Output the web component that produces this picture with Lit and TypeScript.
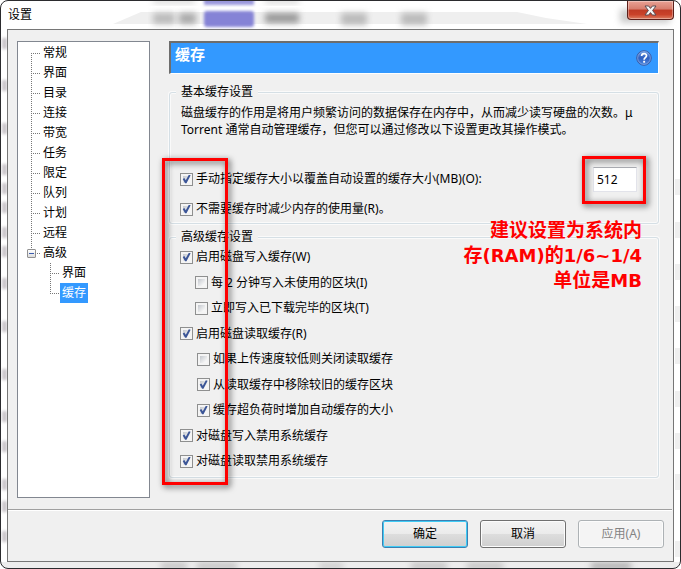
import { LitElement, html, css, svg } from "lit";
import { customElement, property, state } from "lit/decorators.js";
import { classMap } from "lit/directives/class-map.js";

interface Option {
  id: string;
  text: string;
  on: boolean;
  level?: "write" | "read";
}

const UI_FONT = css`"Noto Sans", "Noto Sans CJK SC", sans-serif`;

@customElement("check-option")
class CheckOption extends LitElement {
  @property() text = "";
  @property({ type: Boolean }) on = false;

  static styles = css`
    :host {
      display: block;
    }
    .option {
      display: flex;
      align-items: center;
      gap: 3px;
      height: 16px;
      line-height: 16px;
      white-space: nowrap;
    }
    .box {
      appearance: none;
      flex: none;
      box-sizing: border-box;
      width: 13px;
      height: 13px;
      margin: 0;
      border: 1px solid #8e8f8f;
      background: linear-gradient(135deg, #c3c7cd, #f6f6f6 80%) content-box, #f4f4f4;
      padding: 2px;
      position: relative;
    }
    .box:checked::before {
      content: "";
      position: absolute;
      inset: 1px;
      background: #3b5597;
      clip-path: polygon(8% 50%, 26% 40%, 42% 64%, 76% 2%, 96% 8%, 50% 98%, 34% 98%);
    }
  `;

  render() {
    return html`<label class="option">
      <input class="box" type="checkbox" .checked=${this.on} />
      <span>${this.text}</span>
    </label>`;
  }
}

@customElement("settings-tree")
class SettingsTree extends LitElement {
  @state() private selected = "cache";

  private items = ["常规", "界面", "目录", "连接", "带宽", "任务", "限定", "队列", "计划", "远程"];

  static styles = css`
    :host {
      display: block;
      box-sizing: border-box;
      border: 1px solid #828790;
      background: #fff;
      padding-top: 1px;
    }
    .list {
      list-style: none;
      margin: 0;
      padding: 0;
    }
    .row {
      display: flex;
      height: 20px;
    }
    .branch {
      flex: none;
      width: 23px;
      background:
        repeating-linear-gradient(to bottom, #777 0 1px, transparent 1px 2px) 13px 0 / 1px 100% no-repeat,
        repeating-linear-gradient(to right, #777 0 1px, transparent 1px 2px) 13px 10px / 9px 1px no-repeat;
    }
    .first {
      background-position: 13px 10px, 13px 10px;
    }
    .last {
      background-size: 1px 10px, 9px 1px;
    }
    .nested .branch {
      width: 42px;
      background-position: 32px 0, 32px 10px;
    }
    .item {
      font: inherit;
      color: #000;
      border: 0;
      background: none;
      margin: 0;
      padding: 0 2px;
      line-height: 20px;
    }
    .branch.parent {
      display: flex;
      align-items: center;
      padding-left: 9px;
      width: 14px;
    }
    .toggle {
      box-sizing: border-box;
      width: 9px;
      height: 9px;
      padding: 0;
      border: 1px solid #919191;
      border-radius: 1px;
      background:
        linear-gradient(#3b5cae, #3b5cae) center / 5px 1px no-repeat,
        linear-gradient(#fff, #dcdcdc);
    }
    .selected {
      background: #3399ff;
      color: #fff;
    }
  `;

  private item(id: string, text: string) {
    return html`<button
      class=${classMap({ item: true, selected: this.selected === id })}
      @click=${() => (this.selected = id)}
    >${text}</button>`;
  }

  render() {
    return html`<ul class="list">
      ${this.items.map(
        (t, i) => html`<li class="row">
          <span class=${classMap({ branch: true, first: i === 0 })}></span>${this.item(t, t)}
        </li>`,
      )}
      <li>
        <div class="row">
          <span class="branch last parent"><button class="toggle" aria-label="折叠"></button></span>
          ${this.item("advanced", "高级")}
        </div>
        <ul class="list nested">
          <li class="row"><span class="branch"></span>${this.item("advanced-ui", "界面")}</li>
          <li class="row"><span class="branch last"></span>${this.item("cache", "缓存")}</li>
        </ul>
      </li>
    </ul>`;
  }
}

@customElement("app-root")
class AppRoot extends LitElement {
  @state() private size = "512";

  private advanced: Option[] = [
    { id: "w", text: "启用磁盘写入缓存(W)", on: true },
    { id: "i", text: "每 2 分钟写入未使用的区块(I)", on: false, level: "write" },
    { id: "t", text: "立即写入已下载完毕的区块(T)", on: false, level: "write" },
    { id: "r", text: "启用磁盘读取缓存(R)", on: true },
    { id: "slow", text: "如果上传速度较低则关闭读取缓存", on: false, level: "read" },
    { id: "old", text: "从读取缓存中移除较旧的缓存区块", on: true, level: "read" },
    { id: "grow", text: "缓存超负荷时增加自动缓存的大小", on: true, level: "read" },
    { id: "dw", text: "对磁盘写入禁用系统缓存", on: true },
    { id: "dr", text: "对磁盘读取禁用系统缓存", on: true },
  ];

  static styles = css`
    :host {
      display: block;
      font: 12px/16px ${UI_FONT};
      color: #000;
    }
    .window {
      box-sizing: border-box;
      min-height: 100vh;
      display: flex;
      flex-direction: column;
      position: relative;
      overflow: hidden;
      border: 1px solid #2b2b2e;
      border-radius: 8px;
      padding: 0 6px 6px;
      background: linear-gradient(#fff, #fff) top / 100% calc(100% - 6px) no-repeat, #ededed;
    }
    .glass {
      position: absolute;
      inset: 0;
      width: 100%;
      height: 100%;
    }
    .title {
      position: relative;
      display: flex;
      justify-content: space-between;
      align-items: flex-start;
      height: 28px;
    }
    .caption {
      margin: 0;
      padding-left: 1px;
      font: inherit;
      line-height: 28px;
    }
    .close {
      width: 47px;
      height: 19px;
      padding: 0;
      display: grid;
      place-items: center;
      border: 1px solid #5b1f1a;
      border-top: 0;
      border-radius: 0 0 4px 4px;
      background: linear-gradient(#e9a295, #d67c6c 45%, #bf3a25 50%, #c9422a 75%, #dd7c60);
      box-shadow: inset 0 0 0 1px #ffffff55;
    }
    .client {
      position: relative;
      flex: 1;
      display: flex;
      flex-direction: column;
      border: 1px solid #767676;
      background: #f0f0f0;
    }
    .main {
      flex: 1;
      display: flex;
      gap: 19px;
      padding: 11px 14px 11px 9px;
    }
    .tree {
      flex: none;
      width: 133px;
    }
    .panel {
      flex: 1;
      min-width: 0;
      display: flex;
      flex-direction: column;
      position: relative;
      padding-bottom: 20px;
    }
    .banner {
      display: flex;
      justify-content: space-between;
      align-items: flex-start;
      box-sizing: border-box;
      height: 33px;
      margin-bottom: 10px;
      padding: 0 6px 0 4px;
      border: 2px solid #6d6d6d;
      border-right: 1px solid #fff;
      border-bottom: 1px solid #fff;
      background: #3399ff;
      color: #fff;
    }
    .heading {
      margin: 0;
      font: bold 15px/22px ${UI_FONT};
    }
    .help {
      width: 16px;
      height: 16px;
      margin-top: 7px;
      padding: 0;
      border: 0;
      background: none;
    }
    .group {
      min-width: 0;
      margin: 0 0 5px;
      padding: 4px 10px 6px;
      border: 1px solid #d5dfe5;
      border-radius: 3px;
      box-shadow: 0 0 0 1px #fafafa, inset 0 0 0 1px #fafafa;
    }
    .legend {
      margin-left: -4px;
      padding: 0 5px;
      height: 16px;
      background: #f0f0f0;
    }
    .note {
      margin: 0 8px 28px 1px;
      line-height: 17px;
    }
    .size-row {
      display: flex;
      justify-content: space-between;
      align-items: center;
      height: 26px;
      margin: 0 11px 9px 0;
    }
    .marked {
      position: relative;
      align-self: flex-end;
    }
    .size {
      display: block;
      box-sizing: border-box;
      width: 44px;
      height: 25px;
      padding: 0 3px;
      border: 1px solid #e2e3ea;
      border-top-color: #abadb3;
      background: #fff;
      font: inherit;
    }
    .advanced {
      flex: 1;
      display: flex;
      flex-direction: column;
      margin: 0;
      padding-bottom: 8px;
    }
    .options {
      height: 100%;
      display: flex;
      flex-direction: column;
      justify-content: space-between;
    }
    .write {
      margin-left: 15px;
    }
    .read {
      margin-left: 17px;
    }
    .frame {
      position: absolute;
      box-sizing: border-box;
      border: 3px solid #f00;
      filter: drop-shadow(2px 2px 3px #000000b0);
      pointer-events: none;
    }
    .frame-size {
      inset: -11px -9px -12px -11px;
    }
    .frame-checks {
      left: -7px;
      top: 117px;
      bottom: 13px;
      width: 66px;
    }
    .advice {
      position: absolute;
      right: 17px;
      top: 175px;
      margin: 0;
      text-align: right;
      color: #f00;
      font: bold 19px/25px "Noto Sans CJK SC", sans-serif;
    }
    .latin {
      font: bold 18px/18px "DejaVu Sans", sans-serif;
    }
    .footer {
      display: flex;
      justify-content: flex-end;
      gap: 12px;
      margin-right: 1px;
      padding: 10px 8px 13px;
      border-top: 1px solid #a0a0a0;
      box-shadow: inset 0 1px #fff;
    }
    .button {
      box-sizing: border-box;
      width: 86px;
      height: 28px;
      padding: 0;
      border: 1px solid #707070;
      border-radius: 3px;
      background: linear-gradient(#f3f3f3, #ebebeb 48%, #dddddd 50%, #cfcfcf);
      box-shadow: inset 0 0 0 1px #fcfcfc;
      color: #000;
      font: inherit;
    }
    .default {
      border-color: #3c7fb1;
      box-shadow: inset 0 0 0 1px #3fcbf5;
    }
    .button:disabled {
      border-color: #adb2b5;
      background: #f4f4f4;
      color: #838383;
    }
  `;

  private glass() {
    const smudges: [number, number, number, number, string][] = [
      [152, 12, 22, 11, "#bbb"],
      [178, 12, 17, 11, "#aaa"],
      [264, 12, 34, 10, "#999"],
      [340, 12, 26, 12, "#bbb"],
      [400, 12, 26, 12, "#bbb"],
      [619, 8, 50, 14, "#ccc"],
      [152, -2, 42, 4, "#ccc"],
      [264, -2, 34, 4, "#ccc"],
      [160, 563, 26, 4, "#aaa"],
      [196, 563, 40, 4, "#aaa"],
      [318, 563, 24, 4, "#bbb"],
      [410, 563, 36, 4, "#aaa"],
      [466, 563, 36, 4, "#aaa"],
      [590, 563, 40, 4, "#888"],
    ];
    const left = [37, 79, 122, 163, 182, 201, 226, 245, 277, 320, 368, 410, 440, 478, 500, 530];
    const right = [178, 221, 263, 305, 347, 390, 432, 473, 540];
    return html`<svg class="glass" aria-hidden="true">
      <defs>
        <filter id="soft" x="-20%" y="-60%" width="140%" height="220%">
          <feGaussianBlur stdDeviation="3" />
        </filter>
        <filter id="slight" x="-20%" y="-40%" width="140%" height="180%">
          <feGaussianBlur stdDeviation="1.5" />
        </filter>
      </defs>
      <path d="M112 23 L140 11 H516 L545 17 L586 23 Z" fill="#efefef" />
      ${smudges.map(
        ([x, y, w, h, c]) => svg`<rect x=${x} y=${y} width=${w} height=${h} fill=${c} filter="url(#soft)" />`,
      )}
      <rect x="203" y="-3" width="50" height="7" fill="#9a97dc" filter="url(#slight)" />
      <rect x="203" y="10" width="50" height="16" rx="3" fill="#8583d6" filter="url(#slight)" />
      ${left.map((y) => svg`<rect x="1" y=${y} width="5" height="11" fill="#c9c4c9" filter="url(#slight)" />`)}
      ${right.map((y) => svg`<rect x="674" y=${y} width="5" height="16" fill="#efefef" />`)}
    </svg>`;
  }

  render() {
    return html`<div class="window">
      ${this.glass()}
      <header class="title">
        <h1 class="caption">设置</h1>
        <button class="close" aria-label="关闭">
          <svg width="13" height="11" viewBox="0 0 13 11">
            <path
              d="M1 1 H4.6 L6.5 3.4 L8.4 1 H12 L8.6 5.5 L12 10 H8.4 L6.5 7.6 L4.6 10 H1 L4.4 5.5 Z"
              fill="#f6f6f6"
              stroke="#5a4c52"
              stroke-width="1"
            />
          </svg>
        </button>
      </header>
      <div class="client">
        <main class="main">
          <settings-tree class="tree"></settings-tree>
          <section class="panel">
            <div class="banner">
              <h2 class="heading">缓存</h2>
              <button class="help" aria-label="帮助">
                <svg width="16" height="16" viewBox="0 0 16 16">
                  <defs>
                    <linearGradient id="ball" x1="0" y1="0" x2="0" y2="1">
                      <stop offset="0" stop-color="#6f9be2" />
                      <stop offset="0.5" stop-color="#2f5fc0" />
                      <stop offset="1" stop-color="#4a86e0" />
                    </linearGradient>
                  </defs>
                  <circle cx="8" cy="8" r="7.3" fill="url(#ball)" stroke="#3a5ea8" />
                  <circle cx="8" cy="8" r="6.3" fill="none" stroke="#8fb2ea" stroke-width="0.7" />
                  <path
                    d="M5.6 6.1 C5.6 2.7 10.6 2.9 10.5 5.8 C10.4 7.6 8.1 7.7 8.1 9.7"
                    fill="none"
                    stroke="#fff"
                    stroke-width="1.7"
                  />
                  <rect x="7.2" y="10.8" width="1.9" height="1.9" fill="#fff" />
                </svg>
              </button>
            </div>
            <fieldset class="group">
              <legend class="legend">基本缓存设置</legend>
              <p class="note">
                磁盘缓存的作用是将用户频繁访问的数据保存在内存中，从而减少读写硬盘的次数。μ Torrent
                通常自动管理缓存，但您可以通过修改以下设置更改其操作模式。
              </p>
              <div class="size-row">
                <check-option text="手动指定缓存大小以覆盖自动设置的缓存大小(MB)(O):" on></check-option>
                <div class="marked">
                  <input
                    class="size"
                    type="text"
                    aria-label="缓存大小(MB)"
                    .value=${this.size}
                    @input=${(e: Event) => (this.size = (e.target as HTMLInputElement).value)}
                  />
                  <div class="frame frame-size"></div>
                </div>
              </div>
              <check-option text="不需要缓存时减少内存的使用量(R)。" on></check-option>
            </fieldset>
            <fieldset class="group advanced">
              <legend class="legend">高级缓存设置</legend>
              <div class="options">
                ${this.advanced.map(
                  (o) => html`<check-option class=${o.level ?? ""} .text=${o.text} .on=${o.on}></check-option>`,
                )}
              </div>
            </fieldset>
            <p class="advice">
              建议设置为系统内<br />存<span class="latin">(RAM)</span>的<span class="latin">1/6~1/4</span><br />单位是<span
                class="latin"
                >MB</span
              >
            </p>
            <div class="frame frame-checks"></div>
          </section>
        </main>
        <footer class="footer">
          <button class="button default">确定</button>
          <button class="button">取消</button>
          <button class="button" disabled>应用(A)</button>
        </footer>
      </div>
    </div>`;
  }
}
